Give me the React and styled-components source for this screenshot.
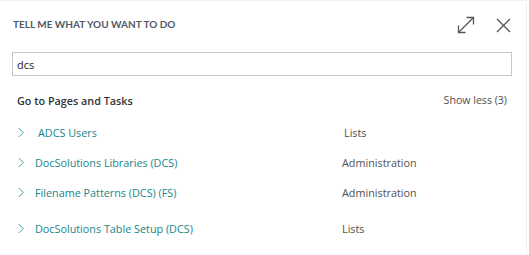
import React from 'react';
import styled, {createGlobalStyle} from "styled-components";

const GlobalStyle = createGlobalStyle`
  body {
    margin: 0;
    background: #ffffff;
    font-family: "Open Sans", "Noto Sans", sans-serif;
  }
`;

const results = [
    {name: 'ADCS Users', category: 'Lists', indent: 3, gap: 0},
    {name: 'DocSolutions Libraries (DCS)', category: 'Administration', indent: 0, gap: 0},
    {name: 'Filename Patterns (DCS) (FS)', category: 'Administration', indent: 0, gap: 0},
    {name: 'DocSolutions Table Setup (DCS)', category: 'Lists', indent: 0, gap: 6},
];

function App() {
    return (
        <>
            <GlobalStyle/>
            <Dialog>
                <Header>
                    <Title>Tell me what you want to do</Title>
                    <Actions>
                        <IconButton aria-label="Expand">
                            <svg width="20" height="18" viewBox="0 0 20 18" fill="none" stroke="#555" strokeWidth="1.3">
                                <path d="M2.5 16.5 L17.5 1.5"/>
                                <path d="M10.5 1.5 H17.5 V8.5"/>
                                <path d="M2.5 9.5 V16.5 H9.5"/>
                            </svg>
                        </IconButton>
                        <IconButton aria-label="Close">
                            <svg width="15" height="15" viewBox="0 0 15 15" fill="none" stroke="#555" strokeWidth="1.3">
                                <path d="M1 1 L14 14 M14 1 L1 14"/>
                            </svg>
                        </IconButton>
                    </Actions>
                </Header>
                <Search defaultValue="dcs"/>
                <SectionHead>
                    <SectionTitle>Go to Pages and Tasks</SectionTitle>
                    <ShowLess>Show less (3)</ShowLess>
                </SectionHead>
                <List>
                    {results.map(r => (
                        <Row key={r.name} $gap={r.gap}>
                            <Chevron viewBox="0 0 8 14" fill="none" stroke="#1a8a90" strokeWidth="1.1">
                                <path d="M1 1 L7 7 L1 13"/>
                            </Chevron>
                            <Name $indent={r.indent}>{r.name}</Name>
                            <Category $indent={r.indent}>{r.category}</Category>
                        </Row>
                    ))}
                </List>
            </Dialog>
        </>
    );
}

const Dialog = styled.div`
  width: 527px;
  height: 254px;
  box-sizing: border-box;
  border-top: 1px solid #f2f2f2;
  border-right: 1px solid #f0f0f0;
  padding: 0 15px 0 12px;
  background: #fff;
`;

const Header = styled.div`
  display: flex;
  align-items: center;
  justify-content: space-between;
  height: 45px;
  padding-left: 1px;
`;

const Title = styled.h1`
  margin: 0;
  font-family: "Lato", "Roboto", sans-serif;
  font-size: 10px;
  font-weight: 700;
  text-transform: uppercase;
  letter-spacing: 0;
  color: #505a66;
`;

const Actions = styled.div`
  display: flex;
  align-items: center;
  gap: 20px;
  margin-top: 3px;
`;

const IconButton = styled.button`
  border: 0;
  background: none;
  padding: 0;
  display: flex;
  cursor: pointer;
`;

const Search = styled.input`
  display: block;
  width: 500px;
  height: 24px;
  box-sizing: border-box;
  margin-top: 6px;
  border: 1px solid #c6c6c6;
  padding: 0 4px;
  font-family: "Open Sans", sans-serif;
  font-size: 11px;
  color: #222;
  outline: none;
`;

const SectionHead = styled.div`
  display: flex;
  justify-content: space-between;
  align-items: center;
  height: 20px;
  margin-top: 14px;
  padding-left: 5px;
  padding-right: 4px;
`;

const SectionTitle = styled.h2`
  margin: 0;
  font-size: 10.8px;
  font-weight: 600;
  color: #333;
`;

const ShowLess = styled.span`
  font-size: 10.6px;
  color: #505050;
`;

const List = styled.div`
  display: flex;
  flex-direction: column;
  margin-top: 7px;
`;

const Row = styled.div`
  display: grid;
  grid-template-columns: 17px 307px 1fr;
  align-items: center;
  height: 30px;
  margin-top: ${p => p.$gap}px;
  padding-left: 6px;
`;

const Chevron = styled.svg`
  width: 6px;
  height: 11px;
`;

const Name = styled.span`
  font-size: 10.8px;
  color: #16868c;
  padding-left: ${p => p.$indent}px;
`;

const Category = styled.span`
  font-size: 10.8px;
  color: #505050;
  padding-left: ${p => p.$indent > 0 ? 2 : 0}px;
`;

export default App;
